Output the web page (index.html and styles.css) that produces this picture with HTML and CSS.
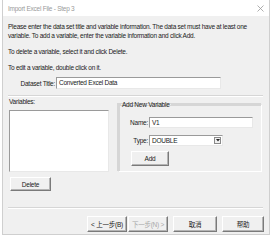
FILE: index.html
```html
<html>
<head>
    <link rel="stylesheet" href="styles.css">
</head>
<body>
    <div class="dialog">
        <div class="titleBar">
            <span class="titleText">Import Excel File - Step 3</span>
            <svg class="closeIcon" width="7" height="7" viewBox="0 0 7 7">
                <path d="M0.5 0.5 L6.5 6.5 M6.5 0.5 L0.5 6.5" stroke="#9a9a9a" stroke-width="0.8" fill="none"/>
            </svg>
        </div>

        <div class="content">
            <p class="info">Please enter the data set title and variable information. The data set must have at least one variable. To add a variable, enter the variable information and click Add.</p>
            <p class="info">To delete a variable, select it and click Delete.</p>
            <p class="info">To edit a variable, double click on it.</p>

            <div class="titleRow">
                <label class="titleLabel">Dataset Title:</label>
                <div class="textBox titleInput">Converted Excel Data</div>
            </div>

            <div class="separator"></div>

            <div class="columns">
                <div class="variablesColumn">
                    <div class="variablesLabel">Variables:</div>
                    <div class="listBox"></div>
                    <button class="button deleteButton">Delete</button>
                </div>

                <fieldset class="groupBox">
                    <legend class="groupTitle">Add New Variable</legend>
                    <div class="fieldRow">
                        <label class="fieldLabel">Name:</label>
                        <div class="textBox nameInput">V1</div>
                    </div>
                    <div class="fieldRow typeRow">
                        <label class="fieldLabel">Type:</label>
                        <div class="textBox selectBox">
                            <span class="selectText">DOUBLE</span>
                            <span class="selectArrow">
                                <svg width="4" height="3" viewBox="0 0 4 3"><path d="M0 0 L4 0 L2 2.5 Z" fill="#222"/></svg>
                            </span>
                        </div>
                    </div>
                    <button class="button addButton">Add</button>
                </fieldset>
            </div>

            <div class="separator bottomSeparator"></div>

            <div class="buttonRow">
                <button class="button navButton">&lt; 上一步(B)</button>
                <button class="button navButton disabled">下一步(N) &gt;</button>
                <button class="button cancelButton">取消</button>
                <button class="button helpButton">帮助</button>
            </div>
        </div>
    </div>
</body>
</html>
```

FILE: styles.css
```css
body {
    margin: 0px;
    background-color: #ffffff;
    font-family: "Liberation Sans", Arial, "Noto Sans CJK SC", sans-serif;
    font-size: 6.5px;
    letter-spacing: -0.25px;
    line-height: 9px;
    color: #1a1a1a;
}
p {
    margin: 0px;
}
button {
    font-family: "Liberation Sans", Arial, "Noto Sans CJK SC", sans-serif;
    font-size: 6.5px;
    letter-spacing: -0.25px;
    line-height: 9px;
    color: #1a1a1a;
    padding: 0px;
}
.dialog {
    margin-left: 2px;
    width: 268px;
    height: 235px;
    box-sizing: border-box;
    border: 1px solid #cfcfcf;
    border-top: none;
    background-color: #f0f0f0;
}
.titleBar {
    height: 16px;
    background-color: #ffffff;
    display: flex;
    align-items: center;
    justify-content: space-between;
    padding: 0px 5px 0px 5px;
}
.titleText {
    color: #9a9a9a;
}
.content {
    padding: 6px 6px 0px 5px;
}
.info {
    margin-bottom: 7px;
}
.info:last-of-type {
    margin-bottom: 0px;
}
.titleRow {
    display: flex;
    align-items: center;
    margin-top: 5px;
}
.titleLabel {
    width: 47px;
    text-align: right;
    margin-right: 1px;
}
.textBox {
    box-sizing: border-box;
    background-color: #ffffff;
    border-style: solid;
    border-width: 1px;
    border-color: #9a9a9a #e8e8e8 #e8e8e8 #9a9a9a;
    padding: 0px 2px;
    line-height: 9px;
}
.titleInput {
    width: 165px;
    height: 12px;
}
.separator {
    margin-top: 6px;
    height: 0px;
    border-top: 1px solid #d6d6d6;
    border-bottom: 1px solid #ffffff;
}
.columns {
    display: flex;
    align-items: flex-start;
    padding-left: 1px;
}
.variablesColumn {
    width: 100px;
}
.listBox {
    margin-top: 4px;
    height: 62px;
    box-sizing: border-box;
    background-color: #ffffff;
    border-style: solid;
    border-width: 1px;
    border-color: #9a9a9a #e8e8e8 #e8e8e8 #9a9a9a;
}
.button {
    display: block;
    box-sizing: border-box;
    background-color: #f0f0f0;
    border-style: solid;
    border-width: 1px;
    border-color: #ffffff #7a7a7a #7a7a7a #ffffff;
    box-shadow: inset -1px -1px #b4b4b4;
    height: 15px;
}
.deleteButton {
    margin-top: 5px;
    margin-left: 1px;
    width: 41px;
    height: 14px;
}
.groupBox {
    margin: 3px 0px 0px 9px;
    padding: 0px 8px 5px 1px;
    width: 144px;
    box-sizing: border-box;
    border-style: solid;
    border-width: 1px;
    border-color: #d6d6d6 #ffffff #ffffff #d6d6d6;
    box-shadow: 1px 1px 0px #d6d6d6 inset, -1px -1px 0px #d6d6d6;
    min-width: 0px;
}
.groupTitle {
    padding: 0px 1px;
    margin-left: 1px;
}
.fieldRow {
    display: flex;
    align-items: center;
    margin-top: 8px;
}
.typeRow {
    margin-top: 7px;
}
.fieldLabel {
    width: 28px;
    text-align: right;
    margin-right: 1px;
}
.nameInput {
    width: 104px;
    height: 11px;
}
.selectBox {
    width: 74px;
    height: 11px;
    display: flex;
    align-items: center;
    justify-content: space-between;
    padding-right: 1px;
}
.selectArrow {
    width: 7px;
    height: 7px;
    box-sizing: border-box;
    border: 1px solid #8a8a8a;
    background-color: #f0f0f0;
    display: flex;
    align-items: center;
    justify-content: center;
}
.addButton {
    margin-top: 5px;
    margin-left: 11px;
    width: 38px;
}
.bottomSeparator {
    margin-top: 16px;
}
.buttonRow {
    display: flex;
    justify-content: flex-end;
    margin-top: 7px;
    margin-right: -1px;
}
.navButton {
    width: 40px;
    height: 16px;
}
.disabled {
    color: #a8a8a8;
    margin-left: 1px;
}
.cancelButton {
    width: 44px;
    height: 16px;
    margin-left: 5px;
}
.helpButton {
    width: 42px;
    height: 16px;
    margin-left: 5px;
}
```
